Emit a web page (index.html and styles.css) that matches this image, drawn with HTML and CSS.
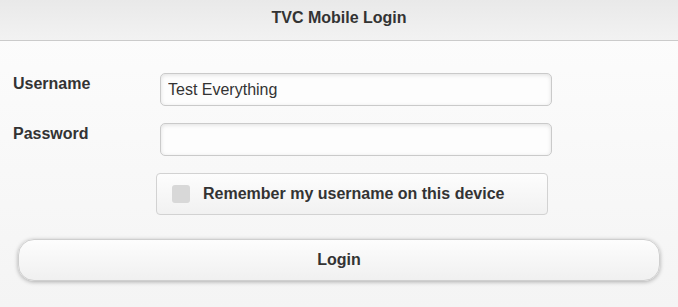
FILE: index.html
```html
<!DOCTYPE html>
<html lang="en">
<head>
    <meta charset="UTF-8">
    <meta name="viewport" content="width=device-width, initial-scale=1.0">
    <title>TVC Mobile Login</title>
    <link rel="stylesheet" href="styles.css">
</head>
<body>
    <div class="page">
        <div class="header">
            <h1>TVC Mobile Login</h1>
        </div>

        <div class="content">
            <form class="login-form" onsubmit="return false;">
                <div class="field">
                    <label for="username">Username</label>
                    <input type="text" id="username" class="text-input" value="Test Everything">
                </div>
                <div class="field">
                    <label for="password">Password</label>
                    <input type="password" id="password" class="text-input">
                </div>
                <div class="remember">
                    <label class="check-label">
                        <span class="check-box"></span>
                        Remember my username on this device
                    </label>
                </div>
                <button class="btn-login" type="submit">Login</button>
            </form>
        </div>
    </div>
</body>
</html>
```

FILE: styles.css
```css
html, body {
    margin: 0;
    padding: 0;
}
body {
    font-family: "Liberation Sans", Arial, sans-serif;
    background: #f6f6f6;
    color: #333;
    width: 678px;
    height: 307px;
    overflow: hidden;
}
.page {
    height: 307px;
    background: linear-gradient(#fdfdfd, #f4f4f4);
}
.header {
    height: 40px;
    border-bottom: 1px solid #cbcbcb;
    background: linear-gradient(#e9e9e9, #f2f2f2);
    display: flex;
    align-items: center;
    justify-content: center;
}
.header h1 {
    margin: 0;
    font-size: 16px;
    font-weight: bold;
    color: #333;
    padding-bottom: 4px;
}
.content {
    padding: 32px 18px 0 13px;
}
.field {
    display: flex;
    align-items: flex-start;
    margin-bottom: 17px;
}
.field label {
    width: 147px;
    font-size: 16px;
    font-weight: bold;
    color: #333;
    padding-top: 2px;
}
.text-input {
    box-sizing: border-box;
    width: 392px;
    height: 33px;
    margin: 0;
    padding: 0 7px;
    font-family: "Liberation Sans", Arial, sans-serif;
    font-size: 16px;
    color: #333;
    background: #fdfdfd;
    border: 1px solid #cacaca;
    border-radius: 5px;
    box-shadow: inset 0 1px 4px rgba(0,0,0,0.12);
    outline: none;
}
.remember {
    margin: 0 0 0 143px;
    width: 392px;
    box-sizing: border-box;
    height: 42px;
    border: 1px solid #d2d2d2;
    border-radius: 4px;
    background: linear-gradient(#fdfdfd, #f1f1f1);
    display: flex;
    align-items: center;
}
.check-label {
    display: flex;
    align-items: center;
    font-size: 16px;
    font-weight: bold;
    color: #333;
    padding-left: 15px;
}
.check-box {
    width: 18px;
    height: 18px;
    border-radius: 3px;
    background: #d8d8d8;
    margin-right: 13px;
}
.btn-login {
    display: block;
    box-sizing: border-box;
    margin: 24px 0 0 5px;
    width: 642px;
    height: 42px;
    font-family: "Liberation Sans", Arial, sans-serif;
    font-size: 16px;
    font-weight: bold;
    color: #333;
    background: linear-gradient(#fdfdfd, #f0f0f0);
    border: 1px solid #cfcfcf;
    border-radius: 16px;
    box-shadow: 0 1px 4px rgba(0,0,0,0.3);
    cursor: pointer;
}
```
